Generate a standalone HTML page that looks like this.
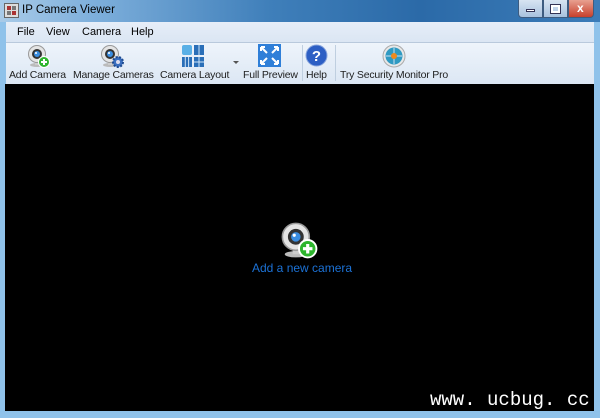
<!DOCTYPE html>
<html style="overflow:hidden"><head><meta charset="utf-8"><style>
*{margin:0;padding:0;box-sizing:border-box}
html,body{width:600px;height:418px;overflow:hidden}
body{background:#6ba9dc;font-family:"Liberation Sans",sans-serif;position:relative}
.title{position:absolute;left:0;top:0;width:600px;height:22px;background:linear-gradient(90deg,#a9cbe8 0%,#7fb0dc 15%,#3f7fba 45%,#2b6aa8 70%,#3c7cb8 100%)}
.frame{position:absolute;left:0;top:22px;width:600px;height:396px;background:#8fc2ea}
.t{position:absolute;font-size:12px;color:#000;white-space:nowrap}
.menu{position:absolute;left:6px;top:22px;width:588px;height:20px;background:linear-gradient(#e6eef8,#dbe6f3)}
.tool{position:absolute;left:6px;top:42px;width:588px;height:42px;background:linear-gradient(#eef4fb,#dce7f4);border-top:1px solid #b9c9dc}
.lbl{position:absolute;top:69px;font-size:10.5px;color:#1e1e1e;white-space:nowrap;letter-spacing:-0.2px}
.sep{position:absolute;top:45px;width:1px;height:36px;background:#bfcfe0}
.black{position:absolute;left:5px;top:84px;width:589px;height:327px;background:#000}
.btn{position:absolute;top:0;height:18px;border:1px solid #3d5c80;border-top:none}
</style></head><body>
<div class="title"></div>
<div class="frame"></div>
<svg style="position:absolute;left:4px;top:3px" width="15" height="15"><rect x="0.5" y="0.5" width="14" height="14" fill="#ddd" stroke="#666"/><rect x="3" y="3" width="4" height="4" fill="#a33"/><rect x="8" y="3" width="4" height="4" fill="#777"/><rect x="3" y="8" width="4" height="4" fill="#777"/><rect x="8" y="8" width="4" height="4" fill="#a33"/></svg>
<div class="t" style="left:22px;top:4px;font-size:11.5px">IP Camera Viewer</div>
<div class="btn" style="left:518px;width:25px;background:linear-gradient(#d7e4f2,#a8c2de);border-radius:0 0 0 4px"></div>
<div class="btn" style="left:543px;width:25px;background:linear-gradient(#d7e4f2,#a8c2de)"></div>
<div class="btn" style="left:568px;width:26px;background:linear-gradient(#e8a090,#c7402c);border-radius:0 0 4px 0"></div>
<div style="position:absolute;left:526px;top:9px;width:9px;height:3px;background:#fff;border:1px solid #335"></div>
<div style="position:absolute;left:551px;top:5px;width:9px;height:8px;border:2px solid #fff;outline:1px solid #335"></div>
<div style="position:absolute;left:577px;top:1px;color:#fff;font-size:12px;font-weight:bold">x</div>
<div class="menu"></div>
<div class="t" style="left:17px;top:26px;font-size:11px">File</div>
<div class="t" style="left:46px;top:26px;font-size:11px">View</div>
<div class="t" style="left:82px;top:26px;font-size:11px">Camera</div>
<div class="t" style="left:131px;top:26px;font-size:11px">Help</div>
<div class="tool"></div>
<svg width="0" height="0" style="position:absolute"><defs>
<g id="cam"><ellipse cx="10" cy="21" rx="7" ry="2" fill="#bbb"/><rect x="8" y="15" width="4" height="6" fill="#ccc"/><circle cx="10" cy="10" r="8.5" fill="#e4e4e4" stroke="#999"/><circle cx="10" cy="10" r="5" fill="#333"/><circle cx="10" cy="10" r="3" fill="#3a8de0"/><circle cx="9" cy="9" r="1" fill="#fff"/></g>
</defs></svg>
<svg style="position:absolute;left:27px;top:44px" width="24" height="24"><use href="#cam"/><circle cx="17" cy="18" r="5.5" fill="#2db52d" stroke="#fff"/><path d="M14 18h6M17 15v6" stroke="#fff" stroke-width="2"/></svg>
<svg style="position:absolute;left:100px;top:44px" width="24" height="24"><use href="#cam"/><circle cx="18" cy="18" r="5" fill="#3a6fc0" stroke="#1d4a90" stroke-width="2" stroke-dasharray="2 1.5"/><circle cx="18" cy="18" r="2" fill="#dde"/></svg>
<svg style="position:absolute;left:181px;top:44px" width="24" height="24"><rect x="1" y="1" width="10" height="10" rx="2" fill="#5ab0e6"/><rect x="13" y="1" width="10" height="10" fill="#2a6fb8"/><rect x="1" y="13" width="10" height="10" fill="#2a6fb8"/><rect x="13" y="13" width="10" height="10" fill="#2a6fb8"/><path d="M18 1v10M4.3 13v10M7.6 13v10M13 18h10M18 13v10" stroke="#cfe4f7"/></svg>
<div style="position:absolute;left:233px;top:61px;border:3px solid transparent;border-top:3px solid #555"></div>
<svg style="position:absolute;left:258px;top:44px" width="23" height="23"><rect width="23" height="23" fill="#2f7fd8"/><path d="M3 3l6 6M3 3h4M3 3v4M20 3l-6 6M20 3h-4M20 3v4M3 20l6-6M3 20h4M3 20v-4M20 20l-6-6M20 20h-4M20 20v-4" stroke="#fff" stroke-width="2"/></svg>
<div class="sep" style="left:302px"></div>
<svg style="position:absolute;left:305px;top:44px" width="23" height="23"><circle cx="11.5" cy="11.5" r="10.5" fill="#2d5fc4" stroke="#8aa6dd"/><text x="11.5" y="17" text-anchor="middle" font-family="Liberation Sans" font-weight="bold" font-size="15" fill="#fff">?</text></svg>
<div class="sep" style="left:335px"></div>
<svg style="position:absolute;left:382px;top:44px" width="24" height="24"><circle cx="12" cy="12" r="11" fill="#e8e8e8" stroke="#aaa"/><circle cx="12" cy="12" r="8.5" fill="#2f9ac2"/><path d="M12 4v16M4 12h16" stroke="#cde" stroke-width="1"/><circle cx="12" cy="12" r="3" fill="#f08a1c"/></svg>
<div class="lbl" style="left:9px">Add Camera</div>
<div class="lbl" style="left:73px">Manage Cameras</div>
<div class="lbl" style="left:160px">Camera Layout</div>
<div class="lbl" style="left:243px">Full Preview</div>
<div class="lbl" style="left:306px">Help</div>
<div class="lbl" style="left:340px">Try Security Monitor Pro</div>
<div class="black"></div>
<svg style="position:absolute;left:280px;top:221px" width="38" height="38" viewBox="0 0 24 24"><use href="#cam"/><circle cx="17.5" cy="17.5" r="5.5" fill="#2db52d" stroke="#fff" stroke-width="1.2"/><path d="M14.5 17.5h6M17.5 14.5v6" stroke="#fff" stroke-width="2"/></svg>
<div style="position:absolute;left:252px;top:261px;font-size:12px;color:#1c72d6;white-space:nowrap">Add a new camera</div>
<div style="position:absolute;left:430px;top:389px;font-size:19px;line-height:22px;color:#fff;font-family:'Liberation Mono',monospace;white-space:nowrap">www. ucbug. cc</div>
</body></html>
